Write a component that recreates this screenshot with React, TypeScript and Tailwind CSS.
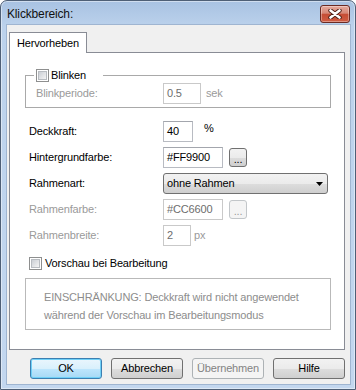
import React from "react";

const FONT = "font-['Liberation_Sans',Arial,sans-serif]";

function CheckBox() {
  return (
    <span className="w-[13px] h-[13px] shrink-0 border border-[#8e8f8f] bg-white p-[1px] flex">
      <span className="flex-1 border border-[#b8bcc1] bg-[linear-gradient(135deg,#cbcfd5,#f4f4f4)]" />
    </span>
  );
}

function TextBox({ value, w, disabled }: { value: string; w: string; disabled?: boolean }) {
  return (
    <div
      className={`${w} h-[21px] flex items-center pl-[3px] bg-white border ${
        disabled ? "border-[#c9c9c9] text-[#6d6d6d]" : "border-[#b8bbc2] border-t-[#a3a6ad] text-black"
      }`}
    >
      {value}
    </div>
  );
}

function DotsButton({ disabled }: { disabled?: boolean }) {
  return (
    <div
      className={`ml-[6px] w-[18px] h-[19px] rounded-[3px] border flex items-end justify-center pb-[3px] leading-[8px] ${
        disabled
          ? "border-[#c2c6c9] bg-[#f4f4f4] text-[#9a9a9a]"
          : "border-[#707070] bg-[linear-gradient(#f2f2f2,#ebebeb_50%,#dddddd_51%,#cfcfcf)] text-black"
      }`}
    >
      ...
    </div>
  );
}

function Row({ label, disabled, children, labelW = "w-[134px]" }: {
  label: string;
  disabled?: boolean;
  children: React.ReactNode;
  labelW?: string;
}) {
  return (
    <div className="flex items-center h-[21px]">
      <span className={`${labelW} shrink-0 ${disabled ? "text-[#9a9a9a]" : "text-black"}`}>{label}</span>
      {children}
    </div>
  );
}

function Button({ label, kind }: { label: string; kind?: "default" | "disabled" }) {
  let cls = "border-[#707070] bg-[linear-gradient(#f2f2f2,#ebebeb_50%,#dddddd_51%,#cfcfcf)] text-black";
  if (kind === "default")
    cls = "border-[#3c7fb1] bg-[linear-gradient(#eaf6fd,#d9f0fc_50%,#bee6fd_51%,#a7d9f5)] text-black shadow-[inset_0_0_0_1px_#6fd0f7]";
  if (kind === "disabled") cls = "border-[#adb2b5] bg-[#f4f4f4] text-[#838383]";
  return (
    <div className={`w-[72px] h-[21px] rounded-[3px] border flex items-center justify-center ${cls}`}>
      {label}
    </div>
  );
}

export default function App() {
  return (
    <div className={`w-[356px] h-[390px] bg-white ${FONT} text-[11px] leading-[13px] tracking-[-0.15px]`}>
      <div className="w-[356px] h-[390px] flex flex-col rounded-t-[7px] border border-[#4e5f76] bg-[linear-gradient(#a8c2e2,#bcd2ec_26px,#c3d7ef)] shadow-[inset_0_0_0_1px_rgba(255,255,255,0.45)]">
        {/* title bar */}
        <div className="h-[24px] shrink-0 flex items-start justify-between pl-[6px] pr-[5px]">
          <span className="mt-[6px] text-[12px] leading-[14px] text-[#111]">Klickbereich:</span>
          <div className="mt-[4px] w-[30px] h-[18px] rounded-[3px] border border-[#6b2a22] bg-[linear-gradient(#e6ab9e,#d68675_45%,#c54d35_52%,#cf5c42)] shadow-[inset_0_0_0_1px_rgba(255,255,255,0.35)] flex items-center justify-center">
            <svg width="14" height="10" viewBox="0 0 14 10">
              <path d="M2.5 1.5 L11.5 8.5 M11.5 1.5 L2.5 8.5" stroke="#4a1d14" strokeWidth="4.4" strokeLinecap="round" />
              <path d="M2.5 1.5 L11.5 8.5 M11.5 1.5 L2.5 8.5" stroke="#ffffff" strokeWidth="2.6" strokeLinecap="round" />
            </svg>
          </div>
        </div>

        {/* client area */}
        <div className="flex-1 ml-[6px] mr-[5px] mb-[5px] bg-[#f0f0f0] shadow-[0_0_0_1px_#9fb5d1] flex flex-col pt-[7px] pl-[2px] pr-[5px]">
          <div className="self-start w-[78px] h-[21px] -mb-[1px] relative z-10 border border-b-0 border-[#898c95] bg-white pl-[7px] flex items-center text-black">
            Hervorheben
          </div>

          <div className="border border-[#898c95] bg-white pt-[15px] pl-[15px] pr-[13px] pb-[19px] flex flex-col">
            <fieldset className="border border-[#a9a9a9] px-[8px] pt-[1px] pb-[3px]">
              <legend className="pl-[2px] pr-[17px]">
                <span className="flex items-center h-[14px] gap-[2px] text-black">
                  <CheckBox />
                  Blinken
                </span>
              </legend>
              <div className="pl-[2px]">
                <Row label="Blinkperiode:" disabled labelW="w-[127px]">
                  <TextBox value="0.5" w="w-[38px]" disabled />
                  <span className="ml-[5px] text-[#9a9a9a]">sek</span>
                </Row>
              </div>
            </fieldset>

            <div className="mt-[13px] pl-[4px] flex flex-col gap-[5px]">
              <Row label="Deckkraft:">
                <TextBox value="40" w="w-[30px]" />
                <span className="ml-[11px] self-start mt-[1px] text-black">%</span>
              </Row>
              <Row label="Hintergrundfarbe:">
                <TextBox value="#FF9900" w="w-[60px]" />
                <DotsButton />
              </Row>
              <Row label="Rahmenart:">
                <div className="w-[165px] h-[21px] rounded-[3px] border border-[#707070] bg-[linear-gradient(#f2f2f2,#ebebeb_50%,#dddddd_51%,#cfcfcf)] flex items-center justify-between pl-[3px] pr-[4px] text-black">
                  <span>ohne Rahmen</span>
                  <svg width="7" height="4" viewBox="0 0 7 4">
                    <path d="M0 0 H7 L3.5 4 Z" fill="#000" />
                  </svg>
                </div>
              </Row>
              <Row label="Rahmenfarbe:" disabled>
                <TextBox value="#CC6600" w="w-[60px]" disabled />
                <DotsButton disabled />
              </Row>
              <Row label="Rahmenbreite:" disabled>
                <TextBox value="2" w="w-[28px]" disabled />
                <span className="ml-[3px] text-[#9a9a9a]">px</span>
              </Row>
            </div>

            <div className="mt-[11px] pl-[4px] flex items-center h-[13px] gap-[3px] text-black">
              <CheckBox />
              Vorschau bei Bearbeitung
            </div>

            <div className="mt-[8px] h-[52px] border border-[#b9b9b9] pl-[18px] pt-[9px] leading-[18px] text-[#8d8d8d]">
              EINSCHRÄNKUNG: Deckkraft wird nicht angewendet
              <br />
              während der Vorschau im Bearbeitungsmodus
            </div>
          </div>

          <div className="mt-[8px] flex justify-end gap-[9px]">
            <Button label="OK" kind="default" />
            <Button label="Abbrechen" />
            <Button label="Übernehmen" kind="disabled" />
            <Button label="Hilfe" />
          </div>
        </div>
      </div>
    </div>
  );
}
